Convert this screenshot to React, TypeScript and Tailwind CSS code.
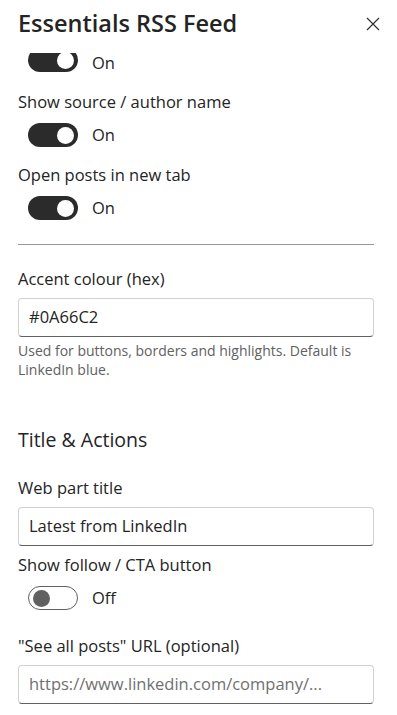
import React from 'react';

const font = { fontFamily: '"Open Sans", "Noto Sans", sans-serif' };

function Pill({ on }: { on: boolean }) {
  return on ? (
    <div className="flex h-[24px] w-[50px] shrink-0 items-center justify-end rounded-full bg-[#2b2b2b] pr-[4px]">
      <div className="h-[17px] w-[17px] rounded-full bg-white" />
    </div>
  ) : (
    <div className="flex h-[24px] w-[50px] shrink-0 items-center rounded-full border border-[#616161] bg-white pl-[4px]">
      <div className="h-[17px] w-[17px] rounded-full bg-[#616161]" />
    </div>
  );
}

// cut: the pane is scrolled so the top of this toggle sits under the header
function Toggle({ on, cut }: { on: boolean; cut?: boolean }) {
  return (
    <div className={`flex items-center pl-[10px] ${cut ? 'h-[19px]' : 'h-[24px]'}`}>
      {cut ? (
        <div className="flex h-[19px] items-end overflow-hidden">
          <Pill on={on} />
        </div>
      ) : (
        <Pill on={on} />
      )}
      <span className="ml-[14px] text-[16.5px] leading-[18px] text-[#242424]">{on ? 'On' : 'Off'}</span>
    </div>
  );
}

function Label({ children }: { children: React.ReactNode }) {
  return <div className="text-[16.5px] leading-[22px] text-[#242424]">{children}</div>;
}

function TextInput({ value, placeholder }: { value?: string; placeholder?: string }) {
  return (
    <div className="flex h-[39px] items-center rounded-[4px] border border-[#d1d1d1] border-b-[#616161] px-[10px] text-[16.5px]">
      {value ? (
        <span className="text-[#242424]">{value}</span>
      ) : (
        <span className="text-[#707070]">{placeholder}</span>
      )}
    </div>
  );
}

export default function App() {
  return (
    <div className="h-[715px] w-[397px] overflow-hidden bg-white" style={font}>
      <div className="flex h-[53px] items-start justify-between pl-[18px] pr-[10px] pt-[6px]">
        <h1 className="text-[23.5px] font-semibold leading-[34px] text-[#242424]">Essentials RSS Feed</h1>
        <button className="mt-[4px] flex h-[28px] w-[28px] items-center justify-center text-[#323130]">
          <svg width="14" height="14" viewBox="0 0 14 14" fill="none" stroke="currentColor" strokeWidth="1.2">
            <path d="M1 1L13 13M13 1L1 13" />
          </svg>
        </button>
      </div>

      <div className="pl-[18px] pr-[23px]">
        <Toggle on cut />

        <div className="mt-[19px]">
          <Label>Show source / author name</Label>
        </div>
        <div className="mt-[10px]">
          <Toggle on />
        </div>

        <div className="mt-[17px]">
          <Label>Open posts in new tab</Label>
        </div>
        <div className="mt-[10px]">
          <Toggle on />
        </div>

        <div className="mt-[24px] h-px bg-[#979797]" />

        <div className="mt-[23px]">
          <Label>Accent colour (hex)</Label>
        </div>
        <div className="mt-[8px]">
          <TextInput value="#0A66C2" />
        </div>
        <p className="mt-[4px] text-[14px] leading-[19px] text-[#616161]">
          Used for buttons, borders and highlights. Default is LinkedIn blue.
        </p>

        <h2 className="mt-[48px] text-[19.5px] leading-[26px] text-[#242424]">Title &amp; Actions</h2>

        <div className="mt-[24px]">
          <Label>Web part title</Label>
        </div>
        <div className="mt-[8px]">
          <TextInput value="Latest from LinkedIn" />
        </div>

        <div className="mt-[8px]">
          <Label>Show follow / CTA button</Label>
        </div>
        <div className="mt-[10px]">
          <Toggle on={false} />
        </div>

        <div className="mt-[25px]">
          <Label>"See all posts" URL (optional)</Label>
        </div>
        <div className="mt-[8px]">
          <TextInput placeholder="https://www.linkedin.com/company/..." />
        </div>
      </div>
    </div>
  );
}
